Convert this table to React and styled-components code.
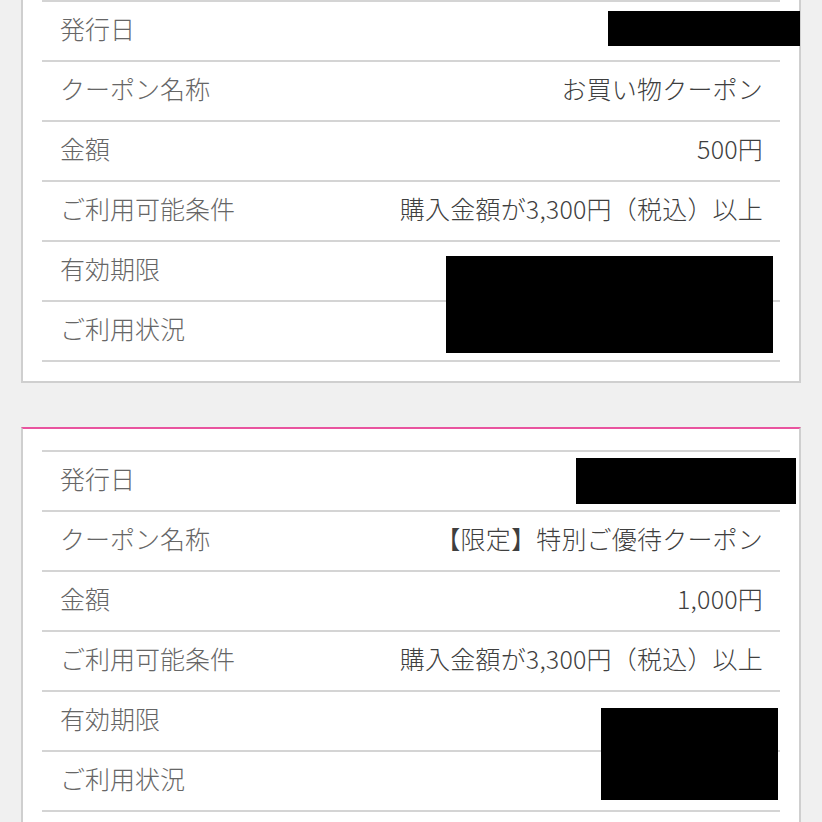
import React from 'react'
import styled, { createGlobalStyle } from 'styled-components'

const GlobalStyle = createGlobalStyle`
  html, body {
    margin: 0;
    padding: 0;
    background: #f0f0f0;
    overflow: hidden;
  }
  body {
    font-family: "Noto Sans CJK JP", "Noto Sans", sans-serif;
  }
`

// masked fields are redacted in the source, so they carry no value
const coupons = [
  {
    issued: null,
    name: 'お買い物クーポン',
    amount: '500円',
    condition: '購入金額が3,300円（税込）以上',
    expiry: null,
    status: null,
    masks: [
      { left: 585, top: 32, width: 192, height: 35 },
      { left: 423, top: 277, width: 327, height: 97 },
    ],
  },
  {
    issued: null,
    name: '【限定】特別ご優待クーポン',
    amount: '1,000円',
    condition: '購入金額が3,300円（税込）以上',
    expiry: null,
    status: null,
    masks: [
      { left: 553, top: 29, width: 220, height: 46 },
      { left: 578, top: 279, width: 177, height: 92 },
    ],
  },
]

const Page = styled.div`
  display: flex;
  flex-direction: column;
  gap: 44px;
  padding: 0 21px;
  margin-top: -23px;
`

const Card = styled.section`
  position: relative;
  background: #fff;
  border: 2px solid #cfcfcf;
  border-top-color: #e9549f;
  padding: 21px 19px 19px;
`

const List = styled.dl`
  margin: 0;
  border-top: 2px solid #d4d4d4;
`

const Row = styled.div`
  display: flex;
  align-items: center;
  justify-content: space-between;
  box-sizing: border-box;
  height: 60px;
  padding: 0 17px 6px 18px;
  border-bottom: 2px solid #d4d4d4;
  font-size: 25px;
  font-weight: 300;
  white-space: nowrap;
`

const Label = styled.dt`
  margin: 0;
  color: #666;
`

const Value = styled.dd`
  margin: 0;
  color: #3f3f3f;
  text-align: right;
  letter-spacing: 0.2px;
`

const Mask = styled.div`
  position: absolute;
  background: #000;
`

const CouponCard = ({ coupon }) => {
  const rows = [
    ['発行日', coupon.issued],
    ['クーポン名称', coupon.name],
    ['金額', coupon.amount],
    ['ご利用可能条件', coupon.condition],
    ['有効期限', coupon.expiry],
    ['ご利用状況', coupon.status],
  ]
  return (
    <Card>
      <List>
        {rows.map(([label, value]) => (
          <Row key={label}>
            <Label>{label}</Label>
            <Value>{value}</Value>
          </Row>
        ))}
      </List>
      {coupon.masks.map((m, i) => (
        <Mask key={i} style={m} />
      ))}
    </Card>
  )
}

export default function App() {
  return (
    <>
      <GlobalStyle />
      <Page>
        {coupons.map((c, i) => (
          <CouponCard key={i} coupon={c} />
        ))}
      </Page>
    </>
  )
}
